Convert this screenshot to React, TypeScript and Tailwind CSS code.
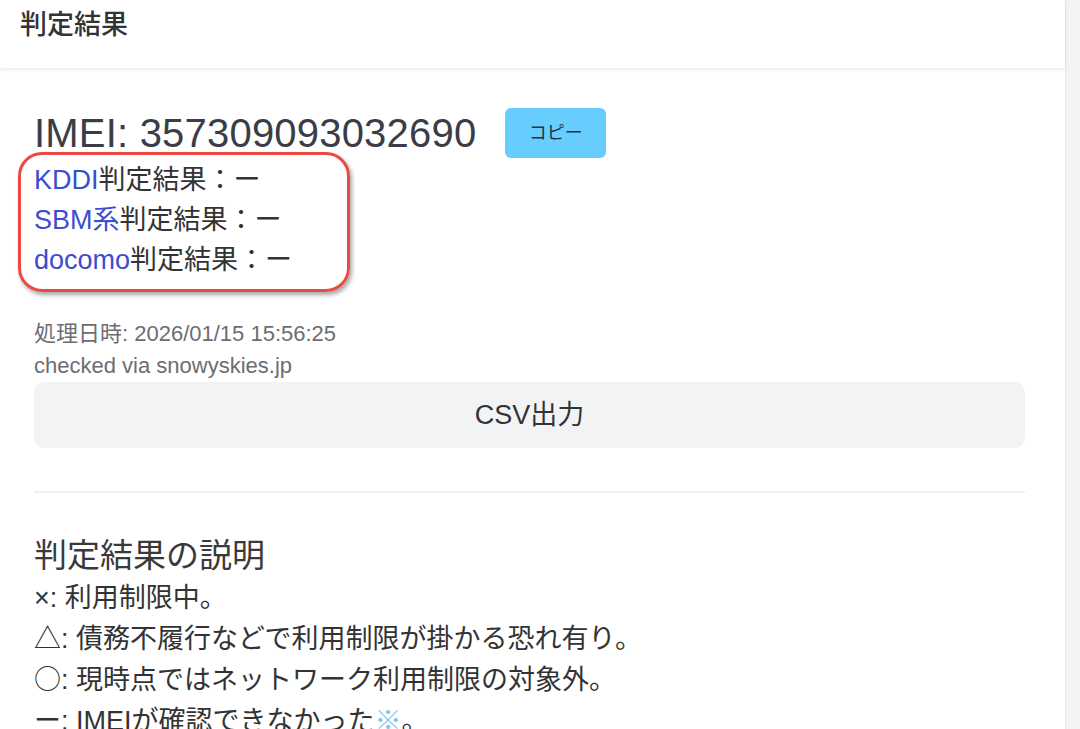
export default function App() {
	return (
		<div className="flex w-[1080px] h-[729px] overflow-hidden bg-[#f4f4f5] font-['Liberation_Sans','Noto_Sans_CJK_JP',sans-serif] text-[#333]">
			<main className="w-[1066px] shrink-0 bg-white border-r border-[#e9e9ea]">
				<header className="h-[68px] px-5 pt-[6px] shadow-[0_2px_4px_rgba(0,0,0,0.08)] text-[27px] leading-[38px] font-medium text-[#333]">
					判定結果
				</header>

				<section className="relative pl-[34px] pr-[40px] pt-[40px]">
					<div className="flex items-center gap-[29px] h-[50px]">
						<h1 className="text-[40px] leading-[50px] tracking-[0.2px] text-[#3a3d48] font-medium">
							IMEI: 357309093032690
						</h1>
						<button className="w-[101px] h-[50px] rounded-md bg-[#66cdfe] text-[18px] text-[#1f3340]">
							コピー
						</button>
					</div>

					<div className="mt-[2px] text-[27px] leading-[40px]">
						<p>
							<span className="text-[#3b4dd0]">KDDI</span>判定結果：ー
						</p>
						<p>
							<span className="text-[#3b4dd0]">SBM系</span>判定結果：ー
						</p>
						<p>
							<span className="text-[#3b4dd0]">docomo</span>判定結果：ー
						</p>
					</div>

					<div className="absolute left-[18px] top-[84px] w-[332px] h-[140px] rounded-[24px] border-[3px] border-[#ec4a40] shadow-[2px_3px_4px_rgba(0,0,0,0.35)]" />

					<div className="mt-[38px] text-[22px] leading-[32px] text-[#6b6d73]">
						<p>処理日時: 2026/01/15 15:56:25</p>
						<p>checked via snowyskies.jp</p>
					</div>

					<button className="w-full h-[66px] rounded-[10px] bg-[#f2f3f5] text-[27px] text-[#333]">
						CSV出力
					</button>

					<hr className="mt-[43px] border-t-2 border-[#f0f0f1]" />

					<h2 className="mt-[41px] text-[33px] leading-[44px] text-[#3a3a3a]">
						判定結果の説明
					</h2>
					<div className="text-[27px] leading-[41px] text-[#333]">
						<p className="h-[41px]">×: 利用制限中。</p>
						<p className="h-[41px]">
							<span className="font-['Noto_Sans_CJK_JP'] leading-none">△</span>: 債務不履行などで利用制限が掛かる恐れ有り。
						</p>
						<p className="h-[41px]">
							<span className="font-['Noto_Sans_CJK_JP'] leading-none">○</span>: 現時点ではネットワーク利用制限の対象外。
						</p>
						<p className="h-[41px]">
							ー: IMEIが確認できなかった<span className="text-[#7cc9f0]">※</span>。
						</p>
					</div>
				</section>
			</main>
		</div>
	);
}
